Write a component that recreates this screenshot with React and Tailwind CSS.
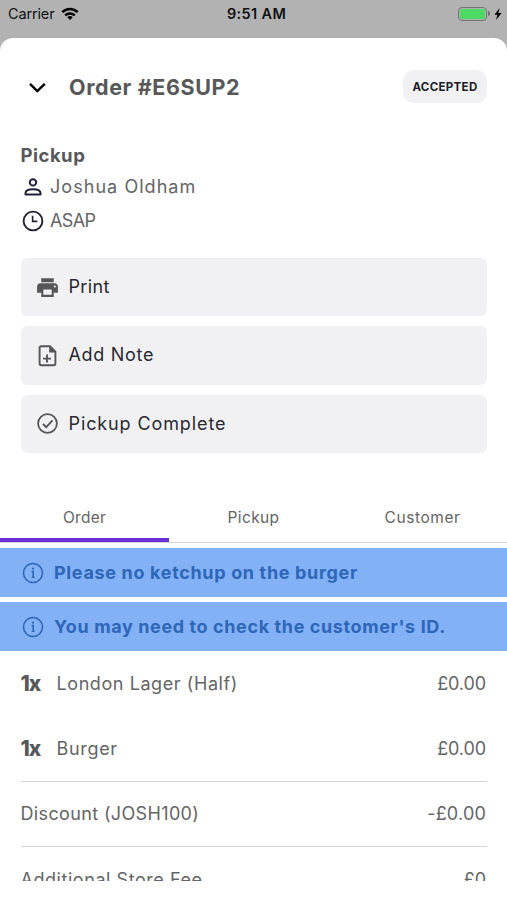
import { MdPrint } from "react-icons/md";

const actions = [
  { label: "Print", icon: PrintIcon, spacing: "tracking-[0.36px]" },
  { label: "Add Note", icon: NoteIcon, spacing: "tracking-[0.7px]" },
  { label: "Pickup Complete", icon: CheckIcon, spacing: "tracking-[0.89px]" },
];

const tabs = [
  { label: "Order", spacing: "tracking-[0.26px]" },
  { label: "Pickup", spacing: "tracking-[0.36px]" },
  { label: "Customer", spacing: "tracking-[0.57px]" },
];

const notices = [
  { text: "Please no ketchup on the burger", spacing: "tracking-[0.66px]" },
  { text: "You may need to check the customer's ID.", spacing: "tracking-[0.61px]" },
];

function PrintIcon() {
  return <MdPrint className="size-[25px] text-[#555558]" />;
}

function NoteIcon() {
  return (
    <svg viewBox="0 0 25 25" className="size-[25px] text-[#555558]" fill="none" stroke="currentColor" strokeWidth="1.9">
      <path d="M15 3.2H6.2a1.6 1.6 0 0 0-1.6 1.6v15.8a1.6 1.6 0 0 0 1.6 1.6h12.6a1.6 1.6 0 0 0 1.6-1.6V8.6z" strokeLinejoin="round" />
      <path d="M14.2 2.6v6.8h6.8z" fill="currentColor" stroke="none" />
      <path d="M12 11.6v8M8 15.6h8" />
    </svg>
  );
}

function CheckIcon() {
  return (
    <svg viewBox="0 0 25 25" className="size-[25px] text-[#555558]" fill="none" stroke="currentColor" strokeWidth="1.8">
      <circle cx="12.5" cy="12.5" r="9.4" />
      <path d="M8 13l3.2 3.2 6.3-6.8" />
    </svg>
  );
}

function PersonIcon() {
  return (
    <svg viewBox="0 0 24 24" className="size-6 text-[#22203a]" fill="none" stroke="currentColor" strokeWidth="2">
      <circle cx="12" cy="7.4" r="3.2" />
      <path d="M4.5 19.4v-1.2c0-2.4 3-3.9 7.5-3.9s7.5 1.5 7.5 3.9v1.2z" strokeLinejoin="round" />
    </svg>
  );
}

function ClockIcon() {
  return (
    <svg viewBox="0 0 24 24" className="size-6 text-[#22222e]" fill="none" stroke="currentColor" strokeWidth="1.9">
      <circle cx="12" cy="12" r="9.4" />
      <path d="M11.6 6.8v5.6h4.7" strokeWidth="1.6" />
    </svg>
  );
}

function InfoIcon() {
  return (
    <svg viewBox="0 0 24 24" className="size-6 shrink-0 text-[#2e66b8]" fill="none" stroke="currentColor" strokeWidth="1.6">
      <circle cx="12" cy="12" r="9.5" />
      <path d="M10.6 10.6h1.6v6" strokeWidth="1.6" />
      <path d="M10.6 16.4h3.2" strokeWidth="1.1" />
      <circle cx="12" cy="7.7" r="1.1" fill="currentColor" stroke="none" />
    </svg>
  );
}

function StatusBar() {
  return (
    <div className="grid h-7 shrink-0 grid-cols-3 items-center text-[14.5px] text-[#111]">
      <div className="flex items-center pl-2">
        <span className="tracking-[-0.15px]">Carrier</span>
        <svg viewBox="0 0 18 14" className="ml-[7px] h-[14px] w-[18px]" fill="none" stroke="#000" strokeWidth="2.5">
          <path d="M1.3 5.2a11 11 0 0 1 15.4 0" />
          <path d="M4.2 8.3a7 7 0 0 1 9.6 0" />
          <path d="M9 13l2.7-2.8a4 4 0 0 0-5.4 0z" fill="#000" stroke="none" />
        </svg>
      </div>
      <span className="pl-[6px] text-center font-semibold tracking-[0.36px]">9:51 AM</span>
      <div className="flex items-center justify-end pb-px pr-[5px]">
        <div className="h-[14px] w-[29px] rounded-[4px] border border-[#737373] p-px">
          <div className="h-full rounded-[2px] bg-[#4cd964]" />
        </div>
        <div className="ml-px h-[5px] w-[2px] rounded-r-full bg-[#737373]" />
        <svg viewBox="0 0 8 12" className="ml-[4px] h-3 w-2" fill="#000">
          <path d="M5.6 0L.4 6.8h3L2 12l5.6-7H4.4z" />
        </svg>
      </div>
    </div>
  );
}

function Item({ name, spacing }) {
  return (
    <div className="flex h-[64.7px] items-center pr-px">
      <span className="w-9 text-[21px] font-extrabold tracking-[-1px] text-[#58585a]">1x</span>
      <span className={spacing}>{name}</span>
      <span className="ml-auto tracking-[-0.1px]">£0.00</span>
    </div>
  );
}

export default function App() {
  return (
    <div className="flex h-[900px] w-[507px] flex-col overflow-hidden bg-[#b2b2b2] font-['Inter','Liberation_Sans',sans-serif] [font-feature-settings:'calt'_0]">
      <StatusBar />
      <main className="mt-[9.5px] flex flex-1 flex-col rounded-t-[13px] bg-white text-[18px] leading-6 text-[#646466]">
        <header className="mt-8 flex h-[34px] items-center pl-[25px] pr-5">
          <svg viewBox="0 0 24 24" className="size-6" fill="none" stroke="#000" strokeWidth="2.5">
            <path d="M5 8.8l7.3 7.3 7.5-7.3" />
          </svg>
          <h1 className="ml-5 text-[21.5px] font-bold tracking-[0.61px] text-[#58585a]">Order #E6SUP2</h1>
          <span className="ml-auto flex h-[33px] w-[84px] items-center justify-center rounded-[11px] bg-[#f1f1f4] text-[11.5px] font-bold tracking-[0.33px] text-[#1d1d28]">
            ACCEPTED
          </span>
        </header>

        <section className="mt-[39.5px] pl-[20.5px] pr-5">
          <h2 className="text-[18.5px] font-bold tracking-[0.5px] text-[#58585a]">Pickup</h2>
          <div className="mt-2 flex items-center gap-[5.5px]">
            <PersonIcon />
            <span className="tracking-[1.05px]">Joshua Oldham</span>
          </div>
          <div className="mt-[10px] flex items-center gap-[5.5px]">
            <ClockIcon />
            <span className="tracking-[-0.6px]">ASAP</span>
          </div>
        </section>

        <section className="mt-[25px] flex flex-col gap-[10px] pl-[20.5px] pr-5">
          {actions.map(({ label, icon: Icon, spacing }) => (
            <button key={label} className="flex h-[58.3px] items-center rounded-[6px] bg-[#f1f1f4] pl-[14.5px] text-[#29292f]">
              <Icon />
              <span className={`ml-[8.5px] ${spacing}`}>{label}</span>
            </button>
          ))}
        </section>

        <nav className="mt-[37.5px] grid h-[53px] shrink-0 grid-cols-3 border-b border-[#d4d4d6]">
          {tabs.map(({ label, spacing }, i) => (
            <div
              key={label}
              className={`flex items-center justify-center pt-[3px] text-[15.5px] ${spacing} ${i === 0 ? "border-b-4 border-[#6930d8] pt-[7px]" : ""}`}
            >
              {label}
            </div>
          ))}
        </nav>

        <section className="mt-[5px] flex flex-col gap-[5px]">
          {notices.map(({ text, spacing }) => (
            <div key={text} className="flex h-[49px] items-center bg-[#82b1f5] pl-[20.5px] font-bold text-[#2e66b8]">
              <InfoIcon />
              <span className={`ml-[9.5px] whitespace-nowrap ${spacing}`}>{text}</span>
            </div>
          ))}
        </section>

        <section className="h-[229.5px] shrink-0 overflow-hidden pl-[20.5px] pr-5 pt-[0.5px]">
          <Item name="London Lager (Half)" spacing="tracking-[0.58px]" />
          <Item name="Burger" spacing="tracking-[0.68px]" />
          <div className="flex h-[66px] items-center justify-between border-y border-[#d4d4d6] pr-px">
            <span className="tracking-[0.36px]">Discount (JOSH100)</span>
            <span className="tracking-[0.2px]">-£0.00</span>
          </div>
          <div className="flex h-[65px] items-center justify-between pr-px">
            <span className="tracking-[0.55px]">Additional Store Fee</span>
            <span>£0</span>
          </div>
        </section>
      </main>
    </div>
  );
}
